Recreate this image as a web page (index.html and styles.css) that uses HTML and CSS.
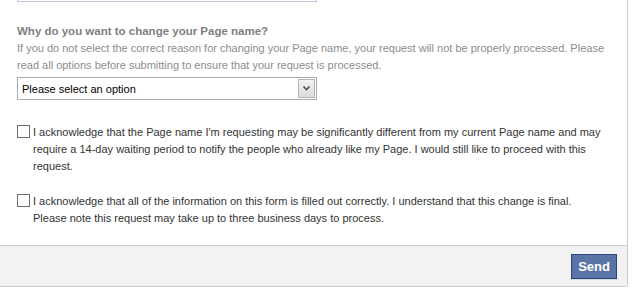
FILE: index.html
```html
<!DOCTYPE html>
<html lang="en">
<head>
    <meta charset="UTF-8">
    <title>Change Page Name</title>
    <link rel="stylesheet" href="styles.css">
</head>
<body>
    <div class="panel">
        <div class="content">
            <div class="field-stub"></div>

            <div class="form-group">
                <label class="question" for="reason">Why do you want to change your Page name?</label>
                <p class="hint">If you do not select the correct reason for changing your Page name, your request will not be properly processed. Please read all options before submitting to ensure that your request is processed.</p>
                <div class="select-wrap">
                    <select id="reason">
                        <option>Please select an option</option>
                    </select>
                    <span class="select-arrow">
                        <svg width="7" height="5" viewBox="0 0 7 5"><path d="M0.5 0.5 L3.5 3.5 L6.5 0.5" fill="none" stroke="#555" stroke-width="1.6"/></svg>
                    </span>
                </div>
            </div>

            <label class="check">
                <input type="checkbox">
                <span>I acknowledge that the Page name I'm requesting may be significantly different from my current Page name and may require a 14-day waiting period to notify the people who already like my Page. I would still like to proceed with this request.</span>
            </label>

            <label class="check">
                <input type="checkbox">
                <span>I acknowledge that all of the information on this form is filled out correctly. I understand that this change is final. Please note this request may take up to three business days to process.</span>
            </label>
        </div>

        <div class="footer">
            <button type="button">Send</button>
        </div>
    </div>
</body>
</html>
```

FILE: styles.css
```css
body {
    margin: 0;
    background: #fff;
    font-family: "Liberation Sans", Arial, sans-serif;
    font-size: 11px;
    color: #333;
}
.panel {
    width: 627px;
    border-right: 1px solid #ccc;
    border-bottom-right-radius: 3px;
}
.content {
    padding: 0 23px 0 17px;
}
.field-stub {
    width: 298px;
    height: 1px;
    border: 1px solid #bdc7d8;
    border-top: none;
}
.form-group {
    padding-top: 21px;
}
.question {
    display: block;
    font-weight: bold;
    font-size: 11.5px;
    color: #7f7f7f;
    line-height: 17px;
}
.hint {
    margin: 0;
    color: #8c8c8c;
    line-height: 17px;
}
.select-wrap {
    position: relative;
    width: 300px;
    margin-top: 3px;
}
select {
    appearance: none;
    -webkit-appearance: none;
    display: block;
    width: 300px;
    height: 23px;
    margin: 0;
    padding: 0 0 0 4px;
    border: 1px solid #a5acb2;
    border-radius: 0;
    background: #fff;
    font-family: "Liberation Sans", Arial, sans-serif;
    font-size: 11px;
    color: #000;
}
.select-arrow {
    position: absolute;
    top: 2px;
    right: 2px;
    width: 15px;
    height: 17px;
    border: 1px solid #b5b5b5;
    background: linear-gradient(#f2f2f2, #dcdcdc);
    display: flex;
    align-items: center;
    justify-content: center;
    pointer-events: none;
}
.check {
    display: flex;
    align-items: flex-start;
    margin-top: 24px;
    line-height: 17px;
    color: #333;
}
.check + .check {
    margin-top: 18px;
}
.check input {
    appearance: none;
    -webkit-appearance: none;
    flex: none;
    width: 13px;
    height: 13px;
    margin: 1px 3px 0 0;
    border: 1px solid #707070;
    background: #fff;
}
.footer {
    margin-top: 18px;
    height: 40px;
    border-top: 1px solid #ccc;
    border-bottom: 1px solid #ccc;
    border-bottom-right-radius: 3px;
    background: #f2f2f2;
    display: flex;
    align-items: center;
    justify-content: flex-end;
    padding-right: 10px;
}
button {
    height: 25px;
    padding: 0 6px;
    border: 1px solid #29447e;
    background: #5b74a8;
    color: #fff;
    font-family: "Liberation Sans", Arial, sans-serif;
    font-weight: bold;
    font-size: 13px;
    box-shadow: 0 1px 0 rgba(0,0,0,0.1);
    cursor: pointer;
}
```
